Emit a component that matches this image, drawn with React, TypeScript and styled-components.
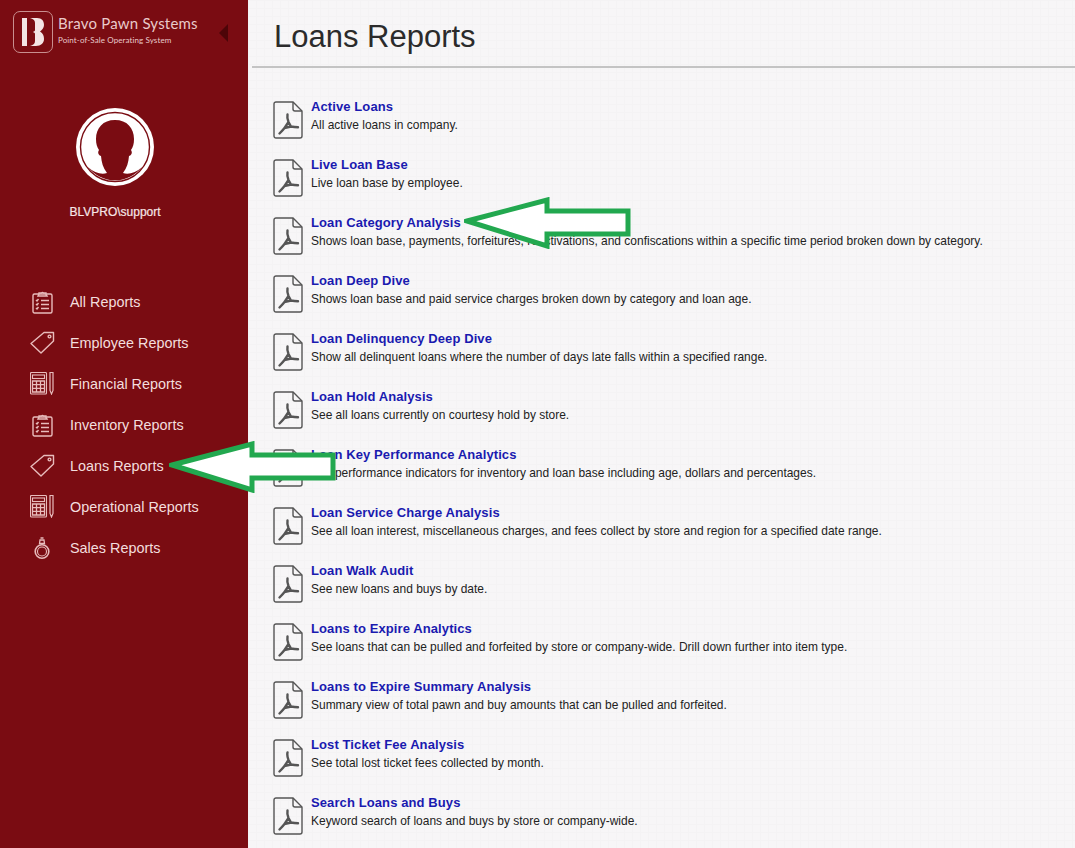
import styled, { createGlobalStyle } from 'styled-components';

const GlobalStyle = createGlobalStyle`
  html, body {
    margin: 0;
    padding: 0;
    height: 100%;
    overflow: hidden;
    font-family: "Liberation Sans", Arial, sans-serif;
  }
`;

const Page = styled.div`
  position: relative;
  display: flex;
  width: 1075px;
  height: 848px;
  overflow: hidden;
`;

const Sidebar = styled.aside`
  flex: 0 0 248px;
  display: flex;
  flex-direction: column;
  background: #7a0c12;
  color: #fff;
`;

const Brand = styled.div`
  display: flex;
  align-items: flex-start;
  padding: 11px 0 0 13px;
  height: 55px;
`;

const LogoBox = styled.div`
  box-sizing: border-box;
  width: 40px;
  height: 42px;
  border: 1px solid #c98f8f;
  border-radius: 7px;
  display: flex;
  align-items: center;
  justify-content: center;
`;

const BrandText = styled.div`
  margin-left: 5px;
  width: 161px;
  color: #e9caca;
`;

const BrandName = styled.div`
  font-family: Lato, sans-serif;
  font-size: 15px;
  line-height: 18px;
  margin-top: 3px;
  white-space: nowrap;
  letter-spacing: 0.2px;
`;

const BrandTag = styled.div`
  font-family: Lato, sans-serif;
  font-size: 8px;
  line-height: 12px;
  margin-top: 2px;
  white-space: nowrap;
  letter-spacing: 0.1px;
`;

const Collapse = styled.div`
  width: 0;
  height: 0;
  margin-top: 13px;
  border-style: solid;
  border-width: 9px 9px 9px 0;
  border-color: transparent #4d0508 transparent transparent;
`;

const Profile = styled.div`
  display: flex;
  flex-direction: column;
  align-items: center;
  padding: 42px 18px 0 0;
`;

const UserName = styled.div`
  margin-top: 19px;
  font-size: 12px;
  line-height: 14px;
  color: #f6e6e6;
  -webkit-text-stroke: 0.2px #f6e6e6;
`;

const Nav = styled.nav`
  display: flex;
  flex-direction: column;
  margin-top: 62px;
`;

const NavItem = styled.a`
  display: flex;
  align-items: center;
  height: 41px;
  padding-left: 28px;
  color: #f3dede;
  font-size: 14.4px;
`;

const NavIcon = styled.span`
  flex: 0 0 28px;
  height: 28px;
  margin-right: 14px;
  display: flex;
  align-items: center;
  justify-content: center;
`;

const Main = styled.main`
  flex: 1;
  background-color: #f7f6f7;
  background-image: linear-gradient(#f4f3f4 1px, transparent 1px),
    linear-gradient(90deg, #f4f3f4 1px, transparent 1px);
  background-size: 8px 8px;
`;

const Header = styled.header`
  margin-left: 4px;
  height: 66px;
  border-bottom: 2px solid #c4c4c4;
  padding-left: 22px;
`;

const Title = styled.h1`
  margin: 0;
  padding-top: 18px;
  font-size: 31px;
  line-height: 38px;
  font-weight: 400;
  color: #2b2b2b;
`;

const ReportList = styled.ul`
  list-style: none;
  margin: 0;
  padding: 30px 0 0 25px;
`;

const ReportRow = styled.li`
  display: flex;
  height: 58px;
`;

const FileIcon = styled.div`
  flex: 0 0 30px;
  height: 38px;
  margin: 3px 8px 0 0;
`;

const ReportBody = styled.div`
  display: flex;
  flex-direction: column;
`;

const ReportLink = styled.a`
  font-size: 13px;
  line-height: 18px;
  font-weight: 700;
  color: #1a1ab0;
  letter-spacing: 0.1px;
  white-space: nowrap;
`;

const ReportDesc = styled.div`
  font-size: 11.97px;
  line-height: 18px;
  color: #222;
  white-space: nowrap;
`;

const Arrow = styled.svg<{ $left: number; $top: number }>`
  position: absolute;
  left: ${(p) => p.$left}px;
  top: ${(p) => p.$top}px;
`;

const PdfIcon = () => (
  <svg width="30" height="38" viewBox="0 0 30 38" fill="none" stroke="#555">
    <path d="M3 1h17l9 9v25a2 2 0 0 1-2 2H3a2 2 0 0 1-2-2V3a2 2 0 0 1 2-2z" strokeWidth="1.4" />
    <path d="M20 1v7a2 2 0 0 0 2 2h7" strokeWidth="1.4" />
    <path
      d="M14.500 13.500c-.5 2.500 0 5 1 7.500l2.500 4.500-6.500 1.500 4-6M11.500 27c-1.500 2-3 3.500-5 5.500M18 25.500c2.500.5 4.500.7 7 .7"
      strokeWidth="2.400"
      strokeLinecap="round"
      strokeLinejoin="round"
    />
  </svg>
);

const Clipboard = () => (
  <svg width="21" height="24" viewBox="0 0 21 24" fill="none" stroke="#e8bcbc" strokeWidth="1.400">
    <rect x="1" y="4" width="19" height="19" rx="1.500" />
    <path d="M7 4V3h2.500a1.200 1.200 0 0 1 2 0H14v1.500l1 1.500H6z" />
    <path d="M4 10l1 1 1.500-2M4 14l1 1 1.500-2M4 18l1 1 1.500-2M9 10.500h8M9 14.500h8M9 18.500h8" />
  </svg>
);

const Tag = () => (
  <svg width="25" height="23" viewBox="0 0 25 23" fill="none" stroke="#e8bcbc" strokeWidth="1.400">
    <path d="M1 12.500L14 1.500h9.500v8.500L11 22z" strokeLinejoin="round" />
    <circle cx="19.500" cy="5.500" r="1.400" />
  </svg>
);

const Calculator = () => (
  <svg width="24" height="23" viewBox="0 0 24 23" fill="none" stroke="#e8bcbc" strokeWidth="1.100">
    <rect x="0.500" y="0.500" width="16" height="21.500" rx="1" />
    <rect x="2.500" y="3" width="12" height="3.500" />
    <path d="M2.500 9h12v11h-12zM2.500 12.700h12M2.500 16.300h12M6.500 9v11M10.500 9v11" strokeWidth="1.300" />
    <path d="M20 0.500h3v18l-1.500 3.500-1.500-3.500z" strokeWidth="1.200" />
  </svg>
);

const Ring = () => (
  <svg width="16" height="24" viewBox="0 0 16 24" fill="none" stroke="#e8bcbc">
    <circle cx="8" cy="15.500" r="6.800" strokeWidth="1.600" />
    <circle cx="8" cy="15.500" r="4.500" strokeWidth="1.100" />
    <path d="M5.500 7.500L6 4h4l.5 3.500zM6.500 2h3" strokeWidth="1.300" />
  </svg>
);

const Avatar = () => (
  <svg width="78" height="78" viewBox="0 0 78 78">
    <circle cx="39" cy="39" r="39" fill="#fff" />
    <circle cx="39" cy="39" r="34.500" fill="#fff" stroke="#7a0c12" strokeWidth="1.400" />
    <path
      d="M39 12C27 12 20 20 20 31C20 36 21 39 23 42C21.500 44 22 47 25 48C25.500 54 27 60 31 65C26 67 18 65 12 59A34 34 0 0 0 66 59C60 65 52 67 47 65C51 60 52.500 54 53 48C56 47 56.500 44 55 42C57 39 58 36 58 31C58 20 51 12 39 12Z"
      fill="#7a0c12"
    />
  </svg>
);

const navItems = [
  { label: 'All Reports', icon: <Clipboard /> },
  { label: 'Employee Reports', icon: <Tag /> },
  { label: 'Financial Reports', icon: <Calculator /> },
  { label: 'Inventory Reports', icon: <Clipboard /> },
  { label: 'Loans Reports', icon: <Tag /> },
  { label: 'Operational Reports', icon: <Calculator /> },
  { label: 'Sales Reports', icon: <Ring /> },
];

const reports = [
  ['Active Loans', 'All active loans in company.'],
  ['Live Loan Base', 'Live loan base by employee.'],
  [
    'Loan Category Analysis',
    'Shows loan base, payments, forfeitures, reactivations, and confiscations within a specific time period broken down by category.',
  ],
  ['Loan Deep Dive', 'Shows loan base and paid service charges broken down by category and loan age.'],
  ['Loan Delinquency Deep Dive', 'Show all delinquent loans where the number of days late falls within a specified range.'],
  ['Loan Hold Analysis', 'See all loans currently on courtesy hold by store.'],
  ['Loan Key Performance Analytics', 'Key performance indicators for inventory and loan base including age, dollars and percentages.'],
  ['Loan Service Charge Analysis', 'See all loan interest, miscellaneous charges, and fees collect by store and region for a specified date range.'],
  ['Loan Walk Audit', 'See new loans and buys by date.'],
  ['Loans to Expire Analytics', 'See loans that can be pulled and forfeited by store or company-wide. Drill down further into item type.'],
  ['Loans to Expire Summary Analysis', 'Summary view of total pawn and buy amounts that can be pulled and forfeited.'],
  ['Lost Ticket Fee Analysis', 'See total lost ticket fees collected by month.'],
  ['Search Loans and Buys', 'Keyword search of loans and buys by store or company-wide.'],
];

const ArrowShape = () => (
  <path
    d="M3 24L83 3v11h81v23H83v12z"
    fill="#fff"
    stroke="#22a84f"
    strokeWidth="5"
    strokeLinejoin="miter"
  />
);

export default function App() {
  return (
    <>
      <GlobalStyle />
      <Page>
        <Sidebar>
          <Brand>
            <LogoBox>
              <svg width="22" height="28" viewBox="0 0 22 28" fill="#f4e4e4">
                <rect x="0" y="0" width="5" height="28" />
                <path d="M8 0H15C20 0 22 3 22 7C22 10 20 12 18 13.500C21 15 22 18 22 21C22 25 19 28 14 28H8C11 27 13 26 13 23V16C13 15 12 14.500 11 14C12 13.500 13 13 13 12V5C13 2 11 1 8 0Z" />
              </svg>
            </LogoBox>
            <BrandText>
              <BrandName>Bravo Pawn Systems</BrandName>
              <BrandTag>Point-of-Sale Operating System</BrandTag>
            </BrandText>
            <Collapse />
          </Brand>
          <Profile>
            <Avatar />
            <UserName>BLVPRO\support</UserName>
          </Profile>
          <Nav>
            {navItems.map((item) => (
              <NavItem key={item.label}>
                <NavIcon>{item.icon}</NavIcon>
                {item.label}
              </NavItem>
            ))}
          </Nav>
        </Sidebar>
        <Main>
          <Header>
            <Title>Loans Reports</Title>
          </Header>
          <ReportList>
            {reports.map(([name, desc]) => (
              <ReportRow key={name}>
                <FileIcon>
                  <PdfIcon />
                </FileIcon>
                <ReportBody>
                  <ReportLink>{name}</ReportLink>
                  <ReportDesc>{desc}</ReportDesc>
                </ReportBody>
              </ReportRow>
            ))}
          </ReportList>
        </Main>
        <Arrow $left={464} $top={197} width="168" height="52" viewBox="0 0 168 52">
          <ArrowShape />
        </Arrow>
        <Arrow $left={169} $top={441} width="168" height="52" viewBox="0 0 168 52">
          <ArrowShape />
        </Arrow>
      </Page>
    </>
  );
}
